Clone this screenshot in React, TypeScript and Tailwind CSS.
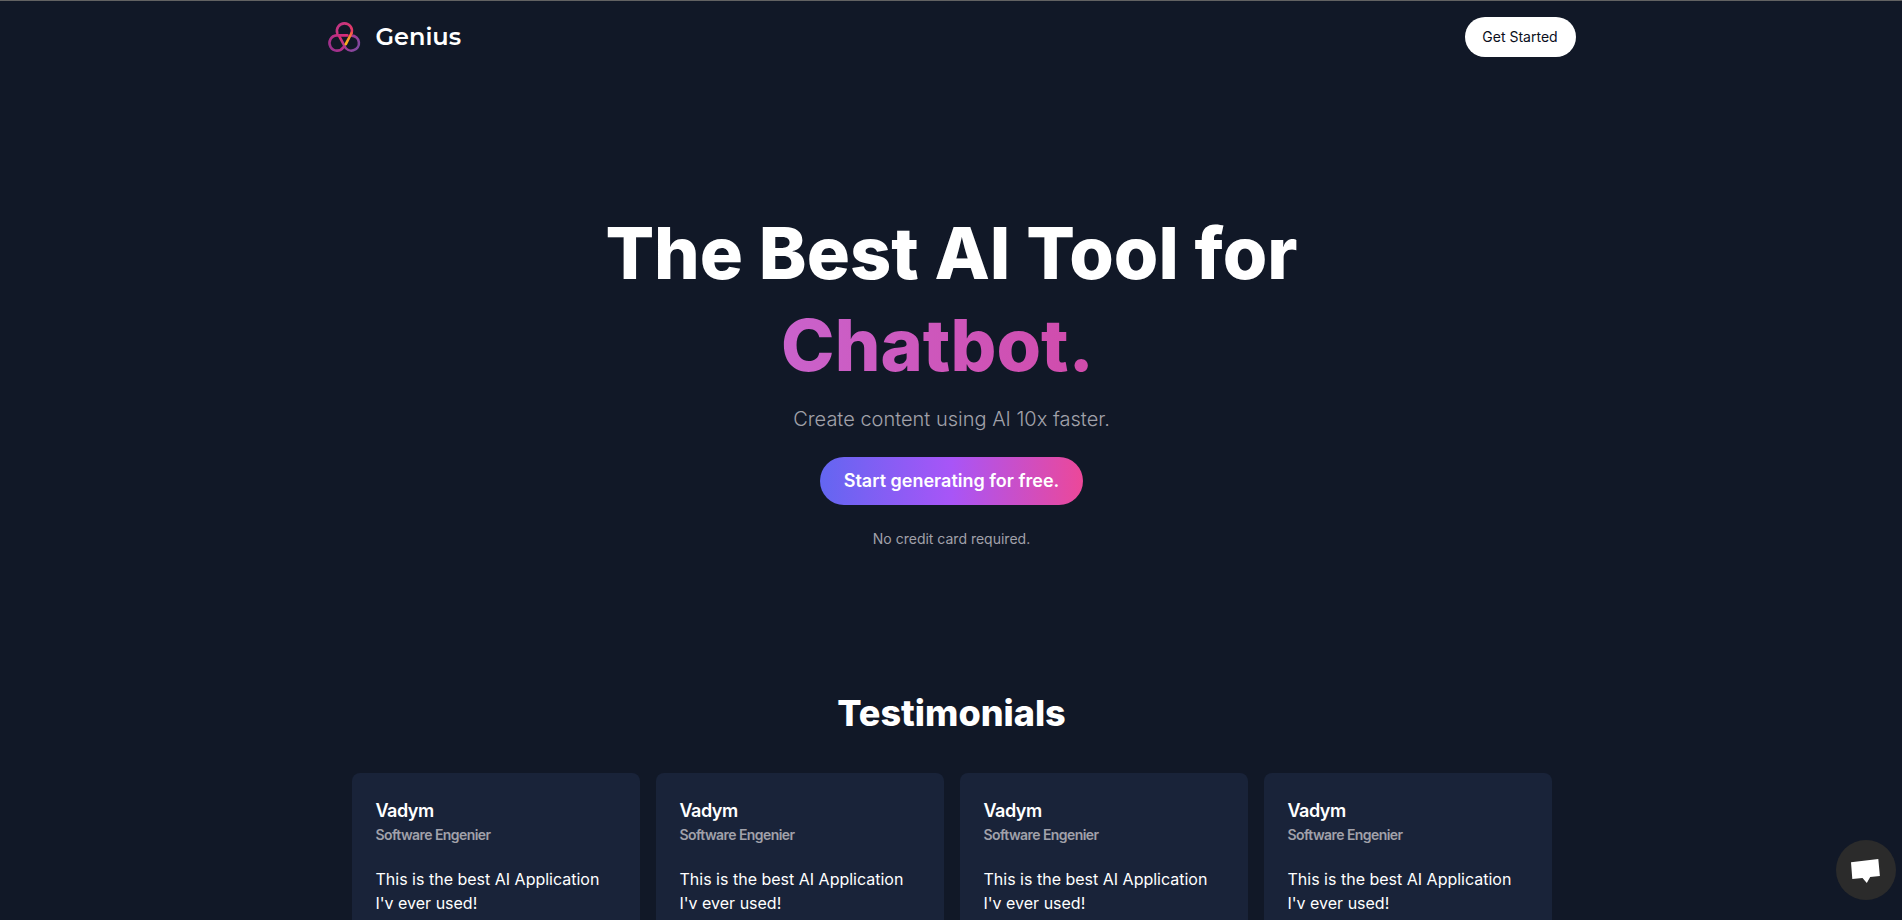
const testimonials = [1, 2, 3, 4].map((id) => ({
  id,
  name: "Vadym",
  title: "Software Engenier",
  description: "This is the best AI Application I'v ever used!",
}));

function Logo() {
  return (
    <svg viewBox="0 0 32 32" className="mr-4 size-8 overflow-visible" fill="none" strokeWidth="2.6" strokeLinecap="round">
      <defs>
        <linearGradient id="top" x1="8" y1="2" x2="25" y2="14" gradientUnits="userSpaceOnUse">
          <stop stopColor="#b8338a" />
          <stop offset="1" stopColor="#ef3a5f" />
        </linearGradient>
        <linearGradient id="left" x1="2" y1="28" x2="18" y2="14" gradientUnits="userSpaceOnUse">
          <stop stopColor="#96318f" />
          <stop offset="1" stopColor="#d92c78" />
        </linearGradient>
        <linearGradient id="right" x1="12" y1="16" x2="30" y2="28" gradientUnits="userSpaceOnUse">
          <stop stopColor="#e12d70" />
          <stop offset="0.5" stopColor="#a13a94" />
          <stop offset="1" stopColor="#7d4aa0" />
        </linearGradient>
        <linearGradient id="bar" x1="24" y1="12" x2="18" y2="24" gradientUnits="userSpaceOnUse">
          <stop stopColor="#f15a45" />
          <stop offset="0.5" stopColor="#f99b2c" />
          <stop offset="1" stopColor="#fdb515" />
        </linearGradient>
      </defs>
      <path stroke="url(#right)" d="M11.2 15.2 L16.6 25.2 A7.5 7.5 0 1 0 23.6 14.6" />
      <path stroke="url(#left)" d="M19.4 14.4 H8.6 A7.6 7.6 0 1 0 15.4 26.2" />
      <path stroke="url(#top)" d="M9.3 12.2 A7.5 7.5 0 1 1 23.6 12" />
      <path stroke="url(#bar)" d="M23.6 12 L17.8 23.2" />
    </svg>
  );
}

export default function App() {
  return (
    <div className="h-[920px] overflow-hidden border-t border-[#626262] bg-[#111827] pl-px font-['Inter',sans-serif] text-white">
      <div className="mx-auto max-w-[1280px]">
        <nav className="flex items-center justify-between p-4">
          <a className="flex items-center">
            <Logo />
            <h1 className="font-['Montserrat','Inter',sans-serif] text-2xl font-semibold">Genius</h1>
          </a>
          <button className="h-10 w-[111px] rounded-full bg-white text-sm text-[#0a0f1c]">Get Started</button>
        </nav>
        <section className="flex flex-col items-center px-4 py-36 text-center">
          <div className="w-full space-y-5 text-7xl leading-none font-extrabold">
            <h1>The Best AI Tool for</h1>
            <div className="bg-linear-to-r/srgb from-[#c084fc] to-[#db2777] bg-clip-text pr-7 text-transparent">Chatbot.</div>
          </div>
          <p className="mt-6 text-xl font-light text-[#a1a1aa]">Create content using AI 10x faster.</p>
          <button className="mt-6 h-12 rounded-full bg-linear-to-r/srgb from-[#6366f1] via-[#a855f7] to-[#ec4899] px-6 text-lg font-semibold">
            Start generating for free.
          </button>
          <p className="mt-6 text-sm text-[#a1a1aa]">No credit card required.</p>
        </section>
        <section className="px-10 pb-20">
          <h2 className="mb-10 text-center text-4xl font-extrabold">Testimonials</h2>
          <div className="grid grid-cols-4 gap-4">
            {testimonials.map((t) => (
              <article key={t.id} className="rounded-lg bg-[#192339] p-6">
                <h3 className="text-lg font-semibold tracking-[-0.5px]">{t.name}</h3>
                <p className="text-sm font-semibold tracking-[-0.57px] text-[#a1a1aa]">{t.title}</p>
                <p className="mt-[22px] pb-6 text-base">{t.description}</p>
              </article>
            ))}
          </div>
        </section>
      </div>
      <button aria-label="Chat" className="fixed right-1.5 bottom-5 flex size-[60px] items-center justify-center rounded-full bg-[#2b2b2b]">
        <svg viewBox="0 0 60 60" className="size-[60px]" fill="white">
          <path d="M15 22.2 L42.3 19 L43.9 36 L34.2 37 L30.8 43 L26.5 38 L16.3 39 Z" />
        </svg>
      </button>
    </div>
  );
}
